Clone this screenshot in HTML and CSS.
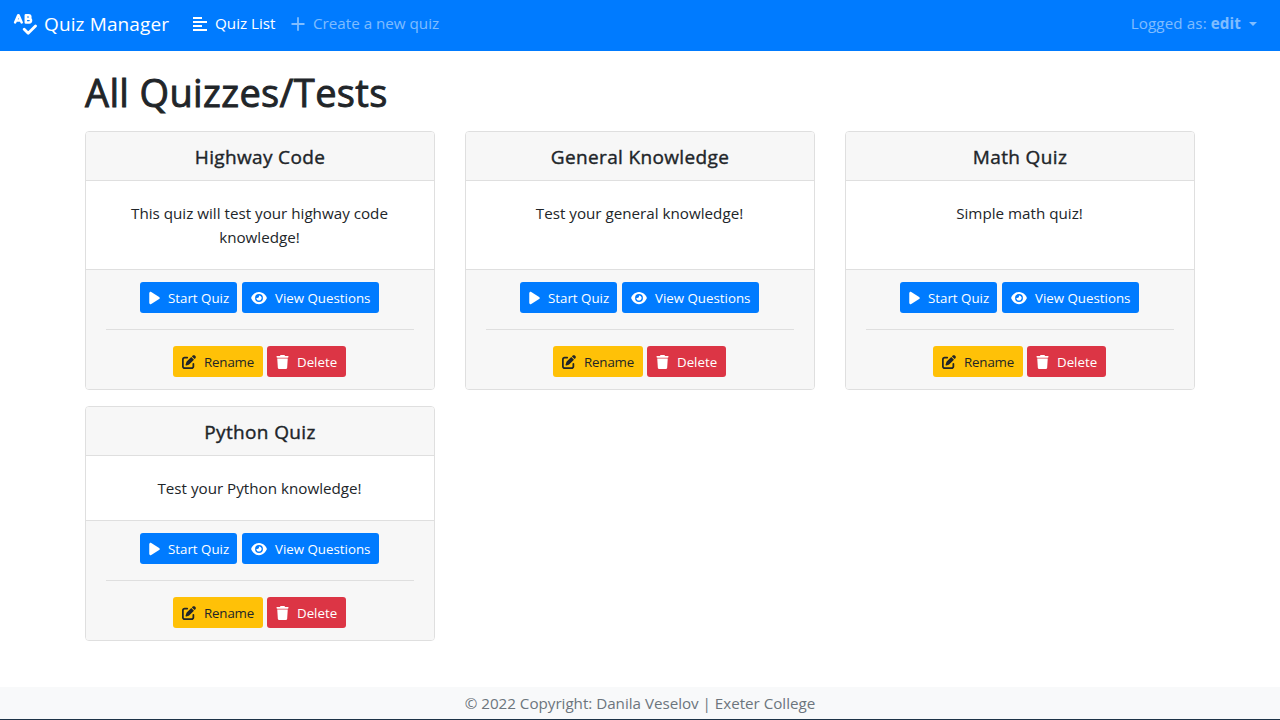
FILE: index.html
```html
<!DOCTYPE html>
<html lang="en">
<head>
<meta charset="utf-8">
<title>Quiz Manager</title>
<link rel="stylesheet" href="styles.css">
</head>
<body>
<svg class="sprite" aria-hidden="true">
  <symbol id="play" viewBox="0 0 384 512"><path d="M73 39c-14.8-9.1-33.4-9.4-48.5-.9S0 62.6 0 80V432c0 17.4 9.4 33.4 24.5 41.9s33.7 8.1 48.5-.9L361 297c14.3-8.7 23-24.2 23-41s-8.7-32.2-23-41L73 39z"/></symbol>
  <symbol id="eye" viewBox="0 0 576 512"><path d="M288 32c-80.8 0-145.5 36.8-192.6 80.6C48.6 156 17.3 208 2.5 243.7c-3.3 7.9-3.3 16.7 0 24.6C17.3 304 48.6 356 95.4 399.4C142.5 443.2 207.2 480 288 480s145.5-36.8 192.6-80.6c46.8-43.5 78.1-95.4 93-131.1c3.3-7.9 3.3-16.7 0-24.6c-14.9-35.7-46.2-87.7-93-131.1C433.5 68.8 368.8 32 288 32zM144 256a144 144 0 1 1 288 0 144 144 0 1 1 -288 0zm144-64c0 35.3-28.7 64-64 64c-7.1 0-13.9-1.2-20.3-3.3c-5.5-1.8-11.9 1.6-11.7 7.4c.3 6.9 1.3 13.8 3.2 20.7c13.7 51.2 66.4 81.6 117.6 67.9s81.6-66.4 67.9-117.6c-11.1-41.5-47.8-69.4-88.6-71.1c-5.8-.2-9.2 6.1-7.4 11.7c2.1 6.4 3.3 13.2 3.3 20.3z"/></symbol>
  <symbol id="trash" viewBox="0 0 448 512"><path d="M135.2 17.7L128 32H32C14.3 32 0 46.3 0 64S14.3 96 32 96H416c17.7 0 32-14.3 32-32s-14.3-32-32-32H320l-7.2-14.3C307.4 6.8 296.3 0 284.2 0H163.8c-12.1 0-23.2 6.8-28.6 17.7zM416 128H32L53.2 467c1.6 25.3 22.6 45 47.9 45H346.9c25.3 0 46.3-19.7 47.9-45L416 128z"/></symbol>
  <symbol id="pen" viewBox="0 0 512 512"><path d="M471.6 21.7c-21.9-21.9-57.3-21.9-79.2 0L362.3 51.7l97.9 97.9 30.1-30.1c21.9-21.9 21.9-57.3 0-79.2L471.6 21.7zm-299.2 220c-6.1 6.1-10.8 13.6-13.5 21.9l-29.6 88.8c-2.9 8.6-.6 18.1 5.8 24.6s15.9 8.7 24.6 5.8l88.8-29.6c8.2-2.7 15.7-7.4 21.9-13.5L437.7 172.3 339.7 74.3 172.4 241.7zM96 64C43 64 0 107 0 160V416c0 53 43 96 96 96H352c53 0 96-43 96-96V320c0-17.7-14.3-32-32-32s-32 14.3-32 32v96c0 17.7-14.3 32-32 32H96c-17.7 0-32-14.3-32-32V160c0-17.7 14.3-32 32-32h96c17.7 0 32-14.3 32-32s-14.3-32-32-32H96z"/></symbol>
</svg>

<nav class="navbar">
  <a class="brand">
    <svg class="brand-icon" viewBox="0 0 24 22" fill="none" stroke="currentColor" stroke-linecap="round" stroke-linejoin="round">
      <path stroke-width="2.5" d="M2.1 9.4 5.2 2.2h.4l3.1 7.2M3.5 7.4h4M12.8 2.2v7.2M12.8 2.2h2.8a1.7 1.7 0 0 1 0 3.5h-2.8M15.6 5.7h.6a1.8 1.8 0 0 1 0 3.7h-3.4"/>
      <path stroke-width="2.8" d="M11.2 16.2l4 4 7.3-7.3"/>
    </svg>
    <span class="brand-name">Quiz Manager</span>
  </a>
  <a class="nav-link active">
    <svg class="nav-icon" viewBox="0 0 14 16"><path d="M0 1h9v2H0zM0 5h14v2H0zM0 9h9v2H0zM0 13h14v2H0z"/></svg>
    <span class="t-list">Quiz List</span>
  </a>
  <a class="nav-link create">
    <svg class="nav-icon" viewBox="0 0 14 16"><path d="M6.1 1.2h1.8v5.9h5.6v1.8H7.9v5.9H6.1V8.9H.5V7.1h5.6z"/></svg>
    <span class="t-create">Create a new quiz</span>
  </a>
  <a class="nav-link user"><span class="t-user">Logged as: <b>edit</b></span><span class="caret"></span></a>
</nav>

<main class="container">
  <h1><span>All Quizzes/Tests</span></h1>
  <div class="grid">
    <section class="card">
      <h2 class="card-header"><span>Highway Code</span></h2>
      <p class="card-body">This quiz will test your highway code<br>knowledge!</p>
      <div class="card-footer">
        <div class="row"><a class="btn primary start"><svg><use href="#play"/></svg><span>Start Quiz</span></a><a class="btn primary view"><svg><use href="#eye"/></svg><span>View Questions</span></a></div>
        <hr>
        <div class="row second"><a class="btn warning"><svg><use href="#pen"/></svg><span>Rename</span></a><a class="btn danger"><svg><use href="#trash"/></svg><span>Delete</span></a></div>
      </div>
    </section>
    <section class="card">
      <h2 class="card-header"><span>General Knowledge</span></h2>
      <p class="card-body">Test your general knowledge!</p>
      <div class="card-footer">
        <div class="row"><a class="btn primary start"><svg><use href="#play"/></svg><span>Start Quiz</span></a><a class="btn primary view"><svg><use href="#eye"/></svg><span>View Questions</span></a></div>
        <hr>
        <div class="row second"><a class="btn warning"><svg><use href="#pen"/></svg><span>Rename</span></a><a class="btn danger"><svg><use href="#trash"/></svg><span>Delete</span></a></div>
      </div>
    </section>
    <section class="card">
      <h2 class="card-header"><span>Math Quiz</span></h2>
      <p class="card-body">Simple math quiz!</p>
      <div class="card-footer">
        <div class="row"><a class="btn primary start"><svg><use href="#play"/></svg><span>Start Quiz</span></a><a class="btn primary view"><svg><use href="#eye"/></svg><span>View Questions</span></a></div>
        <hr>
        <div class="row second"><a class="btn warning"><svg><use href="#pen"/></svg><span>Rename</span></a><a class="btn danger"><svg><use href="#trash"/></svg><span>Delete</span></a></div>
      </div>
    </section>
    <section class="card">
      <h2 class="card-header"><span>Python Quiz</span></h2>
      <p class="card-body">Test your Python knowledge!</p>
      <div class="card-footer">
        <div class="row"><a class="btn primary start"><svg><use href="#play"/></svg><span>Start Quiz</span></a><a class="btn primary view"><svg><use href="#eye"/></svg><span>View Questions</span></a></div>
        <hr>
        <div class="row second"><a class="btn warning"><svg><use href="#pen"/></svg><span>Rename</span></a><a class="btn danger"><svg><use href="#trash"/></svg><span>Delete</span></a></div>
      </div>
    </section>
  </div>
</main>

<footer class="footer"><span>© 2022 Copyright: Danila Veselov | Exeter College</span></footer>
</body>
</html>
```

FILE: styles.css
```css
* { box-sizing: border-box; }

body {
  margin: 0;
  height: 720px;
  display: flex;
  flex-direction: column;
  overflow: hidden;
  background: #fff;
  color: #212529;
  font: 15.2px/24px "Open Sans", "Noto Sans", sans-serif;
}

.sprite { display: none; }

.navbar {
  height: 51px;
  flex: none;
  display: flex;
  align-items: center;
  padding: 0 23px 4px 13px;
  background: #007bff;
  color: #fff;
  white-space: nowrap;
}

.brand { display: flex; align-items: center; width: 180px; }
.brand-icon { width: 24px; height: 22px; margin-right: 7px; }
.brand-name { font-size: 19px; line-height: 30px; letter-spacing: .12px; }

.nav-link { display: flex; align-items: center; color: rgba(255, 255, 255, .5); }
.nav-link.active { color: #fff; width: 98px; }
.nav-link span:not(.caret) { padding-bottom: 2px; }
.nav-icon { width: 14px; height: 16px; margin-right: 8px; fill: currentColor; }
.nav-link.user { margin-left: auto; }
.t-user { letter-spacing: .1px; }
.caret {
  margin-left: 8px;
  border: 4px solid transparent;
  border-top-color: currentColor;
  border-bottom: 0;
}

.container { width: 1110px; margin: 0 auto; flex: 1; }

h1 {
  margin: 17px 0 15px;
  font-size: 38px;
  line-height: 48px;
  font-weight: 400;
  letter-spacing: .36px;
  -webkit-text-stroke: .9px currentColor;
}

.grid {
  display: grid;
  grid-template-columns: repeat(3, 350px);
  column-gap: 30px;
  row-gap: 16px;
}

.card {
  display: flex;
  flex-direction: column;
  border: 1px solid #dfdfdf;
  border-radius: 4px;
  overflow: hidden;
  text-align: center;
}

.card-header {
  margin: 0;
  height: 49px;
  padding-top: 13px;
  background: #f7f7f7;
  border-bottom: 1px solid #dfdfdf;
  font-size: 19px;
  line-height: 24px;
  font-weight: 400;
  letter-spacing: .35px;
  -webkit-text-stroke: .4px currentColor;
}

.card-body { margin: 0; flex: 1; padding: 20px 21px 20px 20px; }

.card-footer {
  height: 120px;
  padding: 12px 20px 11px;
  background: #f7f7f7;
  border-top: 1px solid #dfdfdf;
}

.card-footer hr { margin: 16px 0; border: 0; border-top: 1px solid #dfdfdf; }

.row { display: flex; justify-content: center; gap: 5px; padding-right: 1px; }
.second { gap: 4px; }

.btn {
  display: flex;
  align-items: center;
  height: 31px;
  padding-left: 9px;
  border-radius: 3px;
  font-size: 13.3px;
  line-height: 21px;
  color: #fff;
  white-space: nowrap;
}

.btn span { padding-top: 2px; }
.btn svg { height: 14px; width: 14px; margin-right: 8px; fill: currentColor; flex: none; }
.primary { background: #007bff; }
.start { width: 97px; }
.start svg { width: 11px; }
.view { width: 137px; }
.view svg { width: 16px; }
.warning { width: 90px; background: #ffc107; color: #212529; }
.warning span { letter-spacing: -.15px; }
.danger { width: 79px; background: #dc3545; }
.danger svg { width: 13px; }

.footer {
  height: 33px;
  flex: none;
  padding-top: 4px;
  text-align: center;
  background: #f8f9fa;
  color: #6c757d;
  border-bottom: 1px solid #1d3347;
}
.footer span { letter-spacing: -.02px; }
```
